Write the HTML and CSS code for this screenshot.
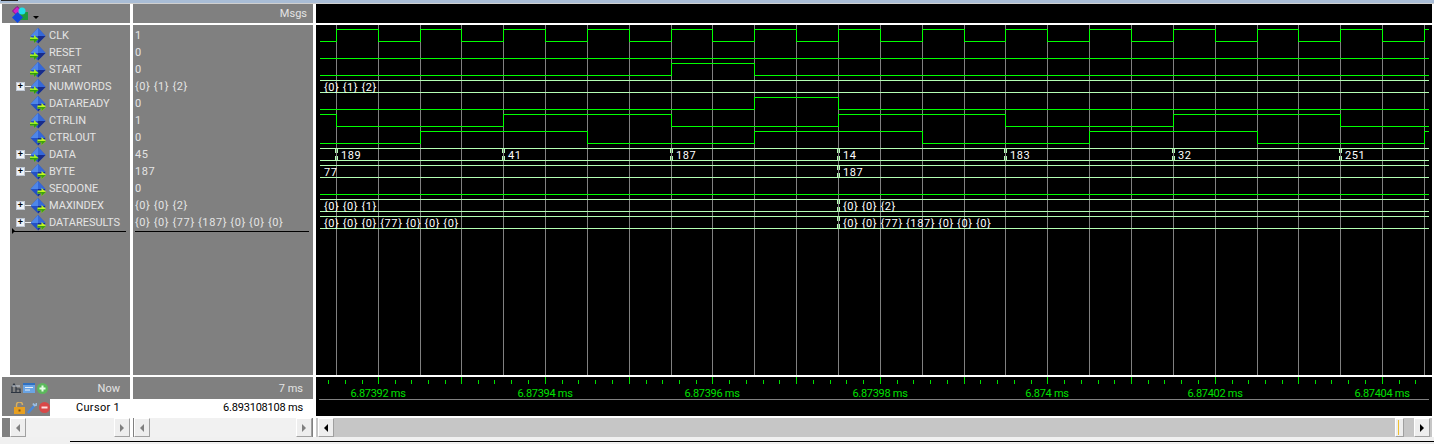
FILE: index.html
```html
<!DOCTYPE html>
<html lang="en">
<head>
  <meta charset="UTF-8" />
  <title>Wave</title>
  <link rel="stylesheet" href="styles.css">
</head>
<body>

  <svg class="defs" width="0" height="0">
    <symbol id="sig-in" viewBox="0 0 16 16">
      <path d="M8 0L15.500 8L8 15.500L0.500 8Z" fill="#2350c4"/>
      <path d="M8 0L0.500 8L8 8Z" fill="#4f86e8"/>
      <path d="M8 0L15.500 8L8 8Z" fill="#3568d8"/>
      <path d="M8 15.500L15.500 8L8 8Z" fill="#182c8a"/>
      <path d="M0 9.500H4V7L8.500 11L4 15V12.500H0Z" fill="#a0f020"/>
      <path d="M0 12.500H4V15L8.500 11H0Z" fill="#2f9a10"/>
    </symbol>
    <symbol id="sig-out" viewBox="0 0 16 16">
      <path d="M8 0L15.500 8L8 15.500L0.500 8Z" fill="#2350c4"/>
      <path d="M8 0L0.500 8L8 8Z" fill="#4f86e8"/>
      <path d="M8 0L15.500 8L8 8Z" fill="#3568d8"/>
      <path d="M8 15.500L15.500 8L8 8Z" fill="#182c8a"/>
      <path d="M7.500 9.500H11.500V7L16 11L11.500 15V12.500H7.500Z" fill="#c0f820"/>
      <path d="M7.500 12.500H11.500V15L16 11H7.500Z" fill="#3fa010"/>
    </symbol>
  </svg>

  <div class="top-strip"><span class="top-notch"></span></div>

  <div class="wave-window">

    <!-- header -->
    <div class="head names-head">
      <svg class="logo" width="17" height="17" viewBox="0 0 17 17">
        <path d="M5 0.500L10 5L5 9.500L0.500 5Z" fill="#d020c8" stroke="#801080"/>
        <rect x="8" y="6" width="8" height="8" fill="#1e9a3c"/>
        <path d="M5.500 6L11 11.500L5.500 17L0 11.500Z" fill="#1048e0"/>
        <circle cx="10" cy="5" r="3.500" fill="#20e0e8"/>
      </svg>
      <span class="caret"></span>
    </div>
    <div class="head msgs-head">Msgs</div>
    <div class="head wave-head"></div>

    <!-- signal names -->
    <div class="names-col">
      <div class="names-list">
        <div class="row"><span class="tree"></span><svg class="sig"><use href="#sig-in"/></svg><span class="name">CLK</span></div>
        <div class="row"><span class="tree"></span><svg class="sig"><use href="#sig-in"/></svg><span class="name">RESET</span></div>
        <div class="row"><span class="tree"></span><svg class="sig"><use href="#sig-in"/></svg><span class="name">START</span></div>
        <div class="row"><span class="tree"><span class="plus">+</span></span><svg class="sig"><use href="#sig-in"/></svg><span class="name">NUMWORDS</span></div>
        <div class="row"><span class="tree"></span><svg class="sig"><use href="#sig-out"/></svg><span class="name">DATAREADY</span></div>
        <div class="row"><span class="tree"></span><svg class="sig"><use href="#sig-in"/></svg><span class="name">CTRLIN</span></div>
        <div class="row"><span class="tree"></span><svg class="sig"><use href="#sig-out"/></svg><span class="name">CTRLOUT</span></div>
        <div class="row"><span class="tree"><span class="plus">+</span></span><svg class="sig"><use href="#sig-in"/></svg><span class="name">DATA</span></div>
        <div class="row"><span class="tree"><span class="plus">+</span></span><svg class="sig"><use href="#sig-out"/></svg><span class="name">BYTE</span></div>
        <div class="row"><span class="tree"></span><svg class="sig"><use href="#sig-out"/></svg><span class="name">SEQDONE</span></div>
        <div class="row"><span class="tree"><span class="plus">+</span></span><svg class="sig"><use href="#sig-out"/></svg><span class="name">MAXINDEX</span></div>
        <div class="row"><span class="tree"><span class="plus">+</span></span><svg class="sig"><use href="#sig-out"/></svg><span class="name">DATARESULTS</span></div>
        <div class="end-line names-end"><span class="end-mark"></span></div>
      </div>
    </div>

    <!-- values -->
    <div class="values-col">
      <div class="row val">1</div>
      <div class="row val">0</div>
      <div class="row val">0</div>
      <div class="row val">{0} {1} {2}</div>
      <div class="row val">0</div>
      <div class="row val">1</div>
      <div class="row val">0</div>
      <div class="row val">45</div>
      <div class="row val">187</div>
      <div class="row val">0</div>
      <div class="row val">{0} {0} {2}</div>
      <div class="row val">{0} {0} {77} {187} {0} {0} {0}</div>
      <div class="end-line"></div>
    </div>

    <!-- waveforms, drawn in page coordinates -->
    <svg class="wave" viewBox="316 25 1116 350" width="1116" height="350">
      <path class="grid" d="M336.500 25V375M378.500 25V375M420.500 25V375M461.500 25V375M503.500 25V375M545.500 25V375M587.500 25V375M629.500 25V375M671.500 25V375M712.500 25V375M754.500 25V375M796.500 25V375M838.500 25V375M880.500 25V375M922.500 25V375M964.500 25V375M1005.500 25V375M1047.500 25V375M1089.500 25V375M1131.500 25V375M1173.500 25V375M1215.500 25V375M1257.500 25V375M1298.500 25V375M1340.500 25V375M1382.500 25V375M1424.500 25V375"/>

      <!-- CLK -->
      <path class="logic" d="M320 41.500H336.500V29.500H378.500V41.500H420.500V29.500H461.500V41.500H503.500V29.500H545.500V41.500H587.500V29.500H629.500V41.500H671.500V29.500H712.500V41.500H754.500V29.500H796.500V41.500H838.500V29.500H880.500V41.500H922.500V29.500H964.500V41.500H1005.500V29.500H1047.500V41.500H1089.500V29.500H1131.500V41.500H1173.500V29.500H1215.500V41.500H1257.500V29.500H1298.500V41.500H1340.500V29.500H1382.500V41.500H1424.500V29.500H1429"/>
      <!-- RESET -->
      <path class="logic" d="M320 58.500H1429"/>
      <!-- START -->
      <path class="logic" d="M320 75.500H671.500V63.500H754.500V75.500H1429"/>
      <!-- DATAREADY -->
      <path class="logic" d="M320 109.500H754.500V97.500H838.500V109.500H1429"/>
      <!-- CTRLIN -->
      <path class="logic" d="M320 114.500H336.500V126.500H503.500V114.500H671.500V126.500H838.500V114.500H1005.500V126.500H1173.500V114.500H1340.500V126.500H1429"/>
      <!-- CTRLOUT -->
      <path class="logic" d="M320 143.500H420.500V131.500H587.500V143.500H754.500V131.500H922.500V143.500H1089.500V131.500H1257.500V143.500H1424.500V131.500H1429"/>
      <!-- SEQDONE -->
      <path class="logic" d="M320 194.500H1429"/>

      <!-- bus rows -->
      <path class="bus" d="M320 80.500H1429M320 92.500H1429"/>
      <path class="bus" d="M320 148.500H1429M320 160.500H1429"/>
      <path class="bus" d="M320 165.500H1429M320 177.500H1429"/>
      <path class="bus" d="M320 199.500H1429M320 211.500H1429"/>
      <path class="bus" d="M320 216.500H1429M320 228.500H1429"/>

      <!-- bus transitions -->
      <path class="bus" d="M335.500 149V153M335.500 156V160M337.500 149V153M337.500 156V160M502.500 149V153M502.500 156V160M504.500 149V153M504.500 156V160M670.500 149V153M670.500 156V160M672.500 149V153M672.500 156V160M837.500 149V153M837.500 156V160M839.500 149V153M839.500 156V160M1004.500 149V153M1004.500 156V160M1006.500 149V153M1006.500 156V160M1172.500 149V153M1172.500 156V160M1174.500 149V153M1174.500 156V160M1339.500 149V153M1339.500 156V160M1341.500 149V153M1341.500 156V160"/>
      <path class="bus" d="M837.500 166V170M837.500 173V177M839.500 166V170M839.500 173V177M837.500 200V204M837.500 207V211M839.500 200V204M839.500 207V211M837.500 217V221M837.500 224V228M839.500 217V221M839.500 224V228"/>

      <text class="bus-text" x="324" y="91">{0} {1} {2}</text>
      <text class="bus-text" x="341" y="159">189</text>
      <text class="bus-text" x="508" y="159">41</text>
      <text class="bus-text" x="676" y="159">187</text>
      <text class="bus-text" x="843" y="159">14</text>
      <text class="bus-text" x="1010" y="159">183</text>
      <text class="bus-text" x="1178" y="159">32</text>
      <text class="bus-text" x="1345" y="159">251</text>
      <text class="bus-text" x="324" y="176">77</text>
      <text class="bus-text" x="843" y="176">187</text>
      <text class="bus-text" x="324" y="210">{0} {0} {1}</text>
      <text class="bus-text" x="843" y="210">{0} {0} {2}</text>
      <text class="bus-text" x="324" y="227">{0} {0} {0} {77} {0} {0} {0}</text>
      <text class="bus-text" x="843" y="227">{0} {0} {77} {187} {0} {0} {0}</text>
    </svg>

    <!-- now / cursor -->
    <div class="foot-names">
      <div class="foot-row">
        <span class="foot-icons">
          <svg width="10" height="11" viewBox="0 0 10 11"><path d="M0 9.500H10M1 9V4L3 1L5 4V9M5 6H9V9" fill="none" stroke="#2c3440" stroke-width="1.200"/><path d="M1 3H9" stroke="#c8d0dc"/></svg>
          <svg width="12" height="11" viewBox="0 0 12 11"><rect width="12" height="10" fill="#6aa4e4"/><rect width="12" height="2" fill="#3070c0"/><path d="M2 4.500H10M2 7H7" stroke="#e8f0f8"/></svg>
          <svg width="11" height="11" viewBox="0 0 11 11"><circle cx="5.500" cy="5.500" r="5.500" fill="#5cb85c"/><path d="M2.500 5.500H8.500M5.500 2.500V8.500" stroke="#e6ffe6" stroke-width="2"/></svg>
        </span>
        <span class="foot-label">Now</span>
      </div>
      <div class="foot-row">
        <span class="foot-icons cursor-icons">
          <svg width="11" height="12" viewBox="0 0 11 12"><path d="M2.500 6V3A3 3 0 0 1 8.500 3" fill="none" stroke="#d8b060" stroke-width="1.400"/><rect y="5" width="11" height="7" fill="#e8a020"/><rect x="4.500" y="7.500" width="2" height="2" fill="#805010"/></svg>
          <svg width="10" height="12" viewBox="0 0 10 12"><path d="M1 11L7 4" stroke="#4a88d8" stroke-width="2.500"/><path d="M6 1.500L7.500 3.500L9.500 3V1" fill="none" stroke="#9ac0e8" stroke-width="1.800"/></svg>
          <svg width="11" height="11" viewBox="0 0 11 11"><circle cx="5.500" cy="5.500" r="5.500" fill="#d84848"/><path d="M2.500 5.500H8.500" stroke="#ffe0e0" stroke-width="2"/></svg>
        </span>
        <span class="cursor-label">Cursor 1</span>
      </div>
    </div>
    <div class="foot-values">
      <div class="foot-row foot-value">7 ms</div>
      <div class="foot-row cursor-value">6.893108108 ms</div>
    </div>
    <svg class="ruler" viewBox="316 377 1116 39" width="1116" height="39">
      <path class="tick" d="M378.500 377V384M461.500 377V384M545.500 377V384M629.500 377V384M712.500 377V384M796.500 377V384M880.500 377V384M964.500 377V384M1047.500 377V384M1131.500 377V384M1215.500 377V384M1298.500 377V384M1382.500 377V384"/>
      <path class="tick" d="M328.500 380V384M345.500 380V384M362.500 380V384M395.500 380V384M411.500 380V384M428.500 380V384M445.500 380V384M478.500 380V384M494.500 380V384M511.500 380V384M528.500 380V384M562.500 380V384M578.500 380V384M595.500 380V384M612.500 380V384M646.500 380V384M662.500 380V384M679.500 380V384M696.500 380V384M729.500 380V384M746.500 380V384M763.500 380V384M779.500 380V384M813.500 380V384M830.500 380V384M846.500 380V384M863.500 380V384M897.500 380V384M913.500 380V384M930.500 380V384M947.500 380V384M980.500 380V384M997.500 380V384M1014.500 380V384M1031.500 380V384M1064.500 380V384M1081.500 380V384M1098.500 380V384M1114.500 380V384M1148.500 380V384M1164.500 380V384M1181.500 380V384M1198.500 380V384M1232.500 380V384M1248.500 380V384M1265.500 380V384M1282.500 380V384M1315.500 380V384M1331.500 380V384M1348.500 380V384M1365.500 380V384M1399.500 380V384M1415.500 380V384"/>
      <path class="grid" d="M319 399.500H1429"/>
      <text class="time" x="378" y="397">6.87392 ms</text>
      <text class="time" x="545" y="397">6.87394 ms</text>
      <text class="time" x="712" y="397">6.87396 ms</text>
      <text class="time" x="880" y="397">6.87398 ms</text>
      <text class="time" x="1047" y="397">6.874 ms</text>
      <text class="time" x="1215" y="397">6.87402 ms</text>
      <text class="time" x="1382" y="397">6.87404 ms</text>
    </svg>

    <!-- scrollbars -->
    <div class="scroll names-scroll">
      <span class="btn"><span class="arrow-l"></span></span>
      <span class="track"></span>
      <span class="btn"><span class="arrow-r"></span></span>
    </div>
    <div class="scroll values-scroll">
      <span class="btn"><span class="arrow-l"></span></span>
      <span class="track"></span>
      <span class="btn"><span class="arrow-r"></span></span>
    </div>
    <div class="scroll wave-scroll">
      <span class="btn btn-dark"><span class="arrow-l"></span></span>
      <span class="track"></span>
      <span class="thumb"></span>
      <span class="btn btn-dark"><span class="arrow-r"></span></span>
    </div>
  </div>

  <div class="bottom-line"></div>

</body>
</html>
```

FILE: styles.css
```css
* {
  box-sizing: border-box;
}

body {
  margin: 0;
  height: 444px;
  overflow: hidden;
  background: #f0f0f0;
  font-family: Roboto, "Liberation Sans", sans-serif;
  font-size: 11px;
  color: #e4e4e4;
}

.defs {
  position: absolute;
}

.top-strip {
  height: 4px;
  background: #a9bdd6;
  border-bottom: 1px solid #d0d0d0;
}

.top-notch {
  display: block;
  width: 17px;
  height: 1px;
  margin-left: 1px;
  background: #222;
}

.wave-window {
  display: grid;
  grid-template-columns: 130px 180px 1116px;
  grid-template-rows: 19px 350px 39px 19px;
  column-gap: 3px;
  row-gap: 2px;
  background: #fff;
  padding-right: 2px;
}

.head {
  background: #808080;
}

.names-head {
  display: flex;
  align-items: center;
  margin-left: 2px;
  padding-left: 10px;
}

.logo {
  margin-top: 1px;
}

.caret {
  width: 0;
  height: 0;
  margin: 7px 0 0 4px;
  border: 3px solid transparent;
  border-top-color: #000;
  border-bottom: 0;
}

.msgs-head {
  padding-right: 6px;
  text-align: right;
  line-height: 19px;
}

.wave-head {
  background: #000;
}

.names-col {
  padding-left: 10px;
}

.names-list {
  height: 100%;
  padding-top: 2px;
  background: #808080;
}

.values-col {
  padding-top: 2px;
  background: #808080;
}

.row {
  display: flex;
  align-items: center;
  height: 17px;
  white-space: nowrap;
}

.tree {
  position: relative;
  flex: none;
  width: 20px;
  height: 17px;
}

.plus {
  position: absolute;
  left: 6px;
  top: 4px;
  width: 9px;
  height: 9px;
  background: #eef2f8;
  border: 1px solid #c0c8d4;
  color: #000;
  font: bold 9px/7px "Liberation Sans", sans-serif;
  text-align: center;
}

.plus::after {
  content: "";
  position: absolute;
  left: 8px;
  top: 3px;
  width: 6px;
  height: 1px;
  background: #e8e8e8;
}

.sig {
  flex: none;
  width: 16px;
  height: 16px;
}

.name {
  margin-left: 3px;
  font-size: 11px;
}

.val {
  padding-left: 2px;
  letter-spacing: 0.6px;
}

.end-line {
  position: relative;
  height: 1px;
  margin: 0 4px 0 2px;
  background: #000;
}

.names-end {
  margin: 0 4px 0 3px;
}

.end-mark {
  position: absolute;
  left: -1px;
  top: -3px;
  width: 0;
  height: 0;
  border: 3px solid transparent;
  border-left-color: #000;
  border-right: 0;
}

.wave,
.ruler {
  display: block;
  background: #000;
  shape-rendering: crispEdges;
}

.grid {
  fill: none;
  stroke: #808080;
}

.logic {
  fill: none;
  stroke: #00ff00;
}

.bus {
  fill: none;
  stroke: #b4ffb4;
}

.bus-text {
  fill: #fff;
  font-size: 11px;
  letter-spacing: 0.6px;
}

.tick {
  fill: none;
  stroke: #00e000;
}

.time {
  fill: #00e000;
  font-size: 11px;
  letter-spacing: -0.3px;
  text-anchor: middle;
}

.foot-names,
.foot-values {
  background: #808080;
}

.foot-names {
  margin-left: 2px;
}

.foot-row {
  display: flex;
  align-items: center;
  justify-content: space-between;
  height: 22px;
}

.foot-row + .foot-row {
  height: 17px;
}

.foot-icons {
  display: flex;
  align-items: center;
  gap: 2px;
  padding-left: 9px;
}

.cursor-icons {
  padding-left: 12px;
}

.foot-label {
  padding-right: 10px;
  font-size: 11px;
}

.cursor-label {
  display: block;
  width: 80px;
  height: 17px;
  padding-right: 10px;
  background: #fff;
  color: #000;
  font-size: 11px;
  line-height: 17px;
  text-align: right;
  letter-spacing: 0.3px;
}

.foot-value {
  justify-content: flex-end;
  padding-right: 10px;
  font-size: 11px;
}

.cursor-value {
  justify-content: flex-end;
  padding-right: 10px;
  background: #fff;
  color: #000;
  font-size: 11px;
  letter-spacing: -0.2px;
}

.scroll {
  display: flex;
  align-items: stretch;
  height: 19px;
  background: #808080;
}

.names-scroll {
  margin-left: 2px;
  padding-left: 8px;
}

.values-scroll {
  padding: 0 1px;
}

.wave-scroll {
  padding: 0 2px;
  background: #c6c6c6;
}

.track {
  flex: 1;
  background: #f1f1f1;
}

.wave-scroll .track {
  background: #c6c6c6;
}

.btn {
  display: flex;
  flex: none;
  align-items: center;
  justify-content: center;
  width: 16px;
  background: #eeeeee;
  border: 1px solid #fff;
  border-right-color: #a0a0a0;
  border-bottom-color: #a0a0a0;
}

.arrow-l,
.arrow-r {
  width: 0;
  height: 0;
  border: 4px solid transparent;
}

.arrow-l {
  border-right-color: #808080;
  border-left: 0;
}

.arrow-r {
  border-left-color: #808080;
  border-right: 0;
}

.btn-dark .arrow-l {
  border-right-color: #000;
}

.btn-dark .arrow-r {
  border-left-color: #000;
}

.thumb {
  position: relative;
  flex: none;
  width: 9px;
  margin-right: 10px;
  background: #eeeeee;
  border: 1px solid #fff;
  border-right-color: #a0a0a0;
  border-bottom-color: #a0a0a0;
}

.thumb::after {
  content: "";
  position: absolute;
  left: 2px;
  top: 1px;
  bottom: 1px;
  width: 1px;
  background: #f0c030;
}

.bottom-line {
  height: 1px;
  margin: 4px 0 0 70px;
  background: #000;
}
```
